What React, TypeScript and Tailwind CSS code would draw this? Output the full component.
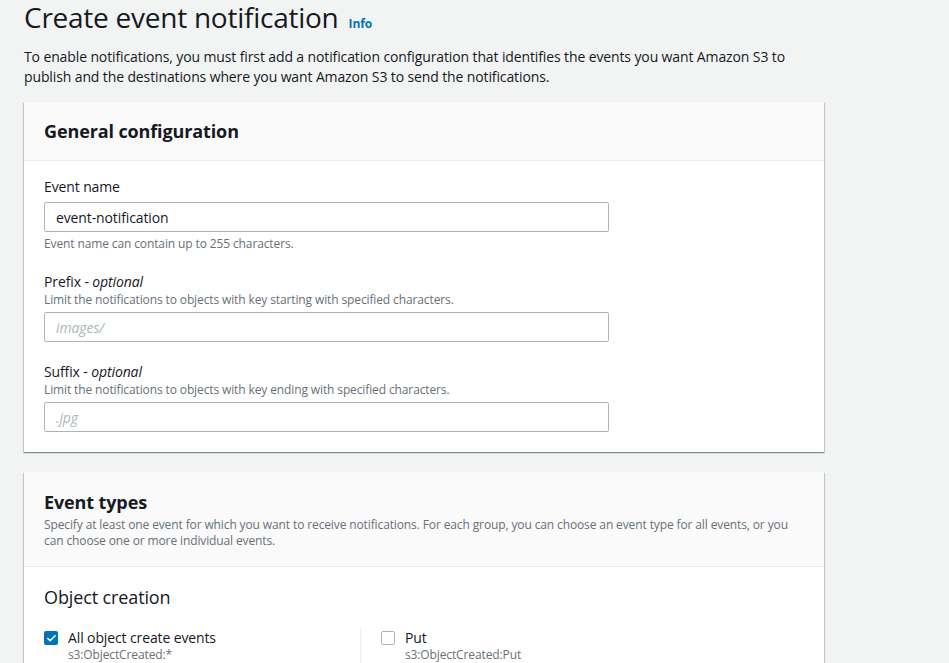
import { Check } from "lucide-react";

const font = { fontFamily: '"Open Sans", "Noto Sans", sans-serif' };

const Field = ({
  label,
  optional,
  desc,
  hint,
  value,
  placeholder,
}: {
  label: string;
  optional?: boolean;
  desc?: string;
  hint?: string;
  value?: string;
  placeholder?: string;
}) => (
  <div className="flex flex-col">
    <div className="text-[14px] leading-[20px] text-[#16191f]">
      {label}
      {optional && (
        <>
          {" - "}
          <i>optional</i>
        </>
      )}
    </div>
    {desc && <div className="text-[12px] leading-[16px] text-[#687078]">{desc}</div>}
    <div
      className={
        (desc ? "mt-[4px] " : "mt-[5px] ") +
        "h-[30px] w-[565px] rounded-[2px] border border-[#aab7b8] bg-white px-[11px] flex items-center text-[14px]"
      }
    >
      {value ? (
        <span className="text-[#16191f]">{value}</span>
      ) : (
        <span className="italic text-[#aab7b8]">{placeholder}</span>
      )}
    </div>
    {hint && <div className="mt-[4px] text-[12px] leading-[16px] text-[#687078]">{hint}</div>}
  </div>
);

const Box = ({ checked, label, sub }: { checked?: boolean; label: string; sub: string }) => (
  <div className="flex gap-[10px]">
    <div
      className={
        checked
          ? "mt-[2px] h-[14px] w-[14px] rounded-[2px] bg-[#0073bb] flex items-center justify-center"
          : "mt-[2px] h-[14px] w-[14px] rounded-[2px] border border-[#aab7b8] bg-white"
      }
    >
      {checked && <Check size={11} strokeWidth={3.5} color="white" />}
    </div>
    <div className="flex flex-col">
      <div className="text-[14px] leading-[18px] text-[#16191f]">{label}</div>
      <div className="text-[12px] leading-[16px] text-[#687078]">{sub}</div>
    </div>
  </div>
);

const cardShadow =
  "w-[800px] bg-white shadow-[0_1px_1px_0_rgba(0,28,36,0.3),1px_1px_1px_0_rgba(0,28,36,0.15),-1px_1px_1px_0_rgba(0,28,36,0.15)]";

export default function App() {
  return (
    <div className="min-h-[663px] bg-[#f2f3f3] px-[24px] tracking-[-0.12px]" style={font}>
      <div className="flex items-baseline gap-[10px]">
        <h1 className="text-[28px] leading-[38px] tracking-[-0.25px] text-[#16191f] -mt-[2px]">
          Create event notification
        </h1>
        <span className="text-[12px] font-bold text-[#0073bb]">Info</span>
      </div>
      <p className="mt-[11px] w-[790px] text-[14px] leading-[20px] text-[#16191f]">
        To enable notifications, you must first add a notification configuration that identifies the events you want
        Amazon S3 to publish and the destinations where you want Amazon S3 to send the notifications.
      </p>

      <div className={"mt-[15px] " + cardShadow}>
        <div className="h-[59px] border-b border-[#eaeded] bg-[#fafafa] px-[20px] flex items-center">
          <h2 className="text-[18px] font-bold text-[#16191f]">General configuration</h2>
        </div>
        <div className="flex flex-col gap-[20px] px-[20px] pt-[16px] pb-[20px]">
          <Field label="Event name" value="event-notification" hint="Event name can contain up to 255 characters." />
          <Field
            label="Prefix"
            optional
            desc="Limit the notifications to objects with key starting with specified characters."
            placeholder="images/"
          />
          <Field
            label="Suffix"
            optional
            desc="Limit the notifications to objects with key ending with specified characters."
            placeholder=".jpg"
          />
        </div>
      </div>

      <div className={"mt-[20px] " + cardShadow}>
        <div className="border-b border-[#eaeded] bg-[#fafafa] px-[20px] pt-[18px] pb-[17px]">
          <h2 className="text-[18px] leading-[24px] font-bold text-[#16191f]">Event types</h2>
          <p className="mt-[3px] text-[12px] leading-[16px] text-[#687078]">
            Specify at least one event for which you want to receive notifications. For each group, you can choose an
            event type for all events, or you can choose one or more individual events.
          </p>
        </div>
        <div className="px-[20px] pt-[18px] pb-[20px]">
          <h3 className="text-[18px] leading-[24px] text-[#16191f]">Object creation</h3>
          <div className="mt-[20px] grid grid-cols-[316px_1fr]">
            <Box checked label="All object create events" sub="s3:ObjectCreated:*" />
            <div className="border-l border-[#eaeded] pl-[20px]">
              <Box label="Put" sub="s3:ObjectCreated:Put" />
            </div>
          </div>
        </div>
      </div>
    </div>
  );
}
